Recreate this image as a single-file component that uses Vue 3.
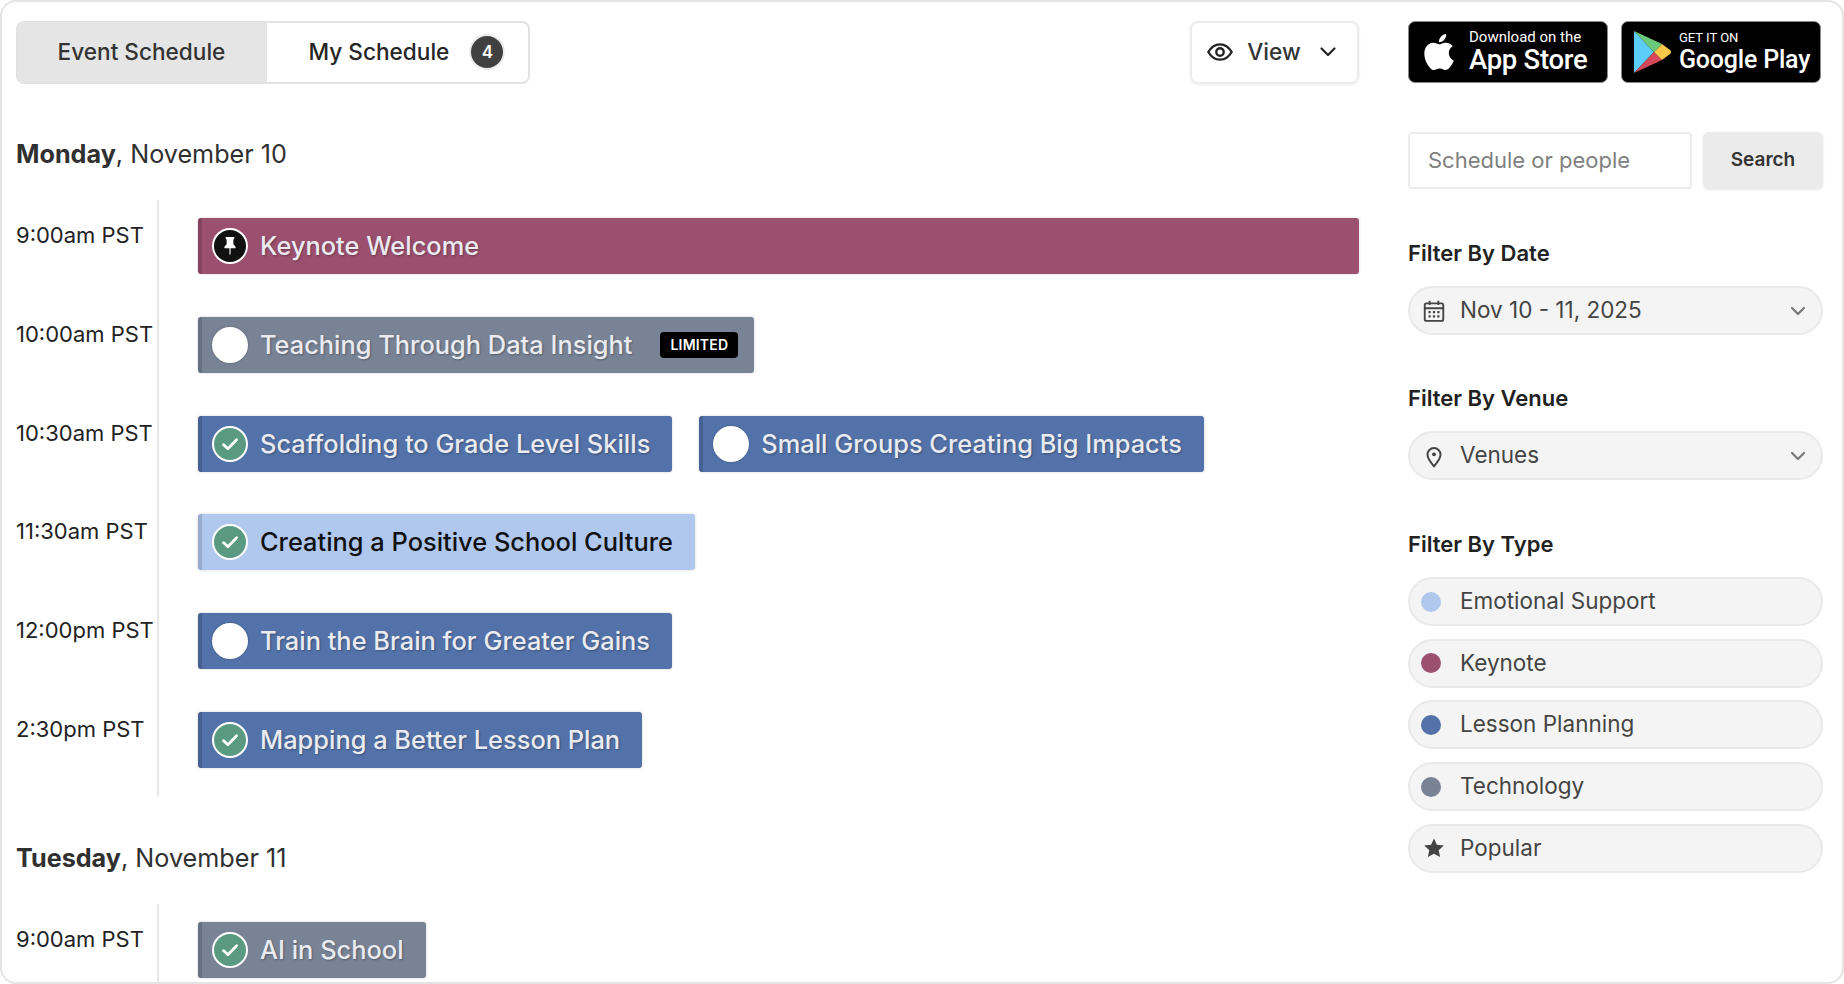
<script setup>
const days = [
  {
    bold: 'Monday', rest: ', November 10',
    rows: [
      { time: '9:00am PST', events: [{ title: 'Keynote Welcome', kind: 'keynote', state: 'pin', full: true }] },
      { time: '10:00am PST', events: [{ title: 'Teaching Through Data Insight', kind: 'tech', state: 'open', badge: 'LIMITED' }] },
      { time: '10:30am PST', events: [
        { title: 'Scaffolding to Grade Level Skills', kind: 'lesson', state: 'done' },
        { title: 'Small Groups Creating Big Impacts', kind: 'lesson', state: 'open' }
      ] },
      { time: '11:30am PST', events: [{ title: 'Creating a Positive School Culture', kind: 'support', state: 'done' }] },
      { time: '12:00pm PST', events: [{ title: 'Train the Brain for Greater Gains', kind: 'lesson', state: 'open' }] },
      { time: '2:30pm PST', events: [{ title: 'Mapping a Better Lesson Plan', kind: 'lesson', state: 'done' }] }
    ]
  },
  {
    bold: 'Tuesday', rest: ', November 11',
    rows: [{ time: '9:00am PST', events: [{ title: 'AI in School', kind: 'tech', state: 'done' }] }]
  }
]
const types = [
  { label: 'Emotional Support', color: '#b0c8ee' },
  { label: 'Keynote', color: '#9c5070' },
  { label: 'Lesson Planning', color: '#5272a9' },
  { label: 'Technology', color: '#788395' }
]
</script>

<template>
  <div class="page">
    <main class="main">
      <div class="topbar">
        <div class="tabs">
          <div class="tab active">Event Schedule</div>
          <div class="tab mine">My Schedule <span class="count">4</span></div>
        </div>
        <div class="view">
          <svg width="28" height="28" viewBox="0 0 24 24" fill="none" stroke="#222" stroke-width="2"><path d="M2 12c2.600-4.400 6-6.600 10-6.600s7.400 2.200 10 6.600c-2.600 4.400-6 6.600-10 6.600S4.600 16.400 2 12z"/><circle cx="12" cy="12" r="3.200"/></svg>
          <span>View</span>
          <svg class="view-chev" width="20" height="20" viewBox="0 0 20 20" fill="none" stroke="#222" stroke-width="2.200" stroke-linecap="round" stroke-linejoin="round"><path d="M3.500 6.500 10 13l6.500-6.500"/></svg>
        </div>
      </div>

      <section v-for="day in days" :key="day.bold" class="day">
        <h2 class="day-title"><b>{{ day.bold }}</b>{{ day.rest }}</h2>
        <div v-for="row in day.rows" :key="row.time" class="row">
          <div class="time">{{ row.time }}</div>
          <div class="events">
            <div v-for="ev in row.events" :key="ev.title" class="event" :class="[ev.kind, { full: ev.full, tight: ev.badge }]">
              <span v-if="ev.state === 'pin'" class="mark pin">
                <svg width="18" height="18" viewBox="0 0 16 16" fill="#fff"><path d="M4.146.146A.5.5 0 0 1 4.500 0h7a.5.5 0 0 1 .5.500c0 .680-.342 1.174-.646 1.479-.126.125-.250.224-.354.298v4.431l.078.048c.203.127.476.314.751.555C12.360 7.775 13 8.527 13 9.500a.5.500 0 0 1-.5.500h-4v4.500c0 .276-.224 1.500-.5 1.500s-.5-1.224-.5-1.500V10h-4a.5.500 0 0 1-.5-.5c0-.973.640-1.725 1.170-2.189A6 6 0 0 1 5 6.708V2.277a3 3 0 0 1-.354-.298C4.342 1.674 4 1.179 4 .5a.5.500 0 0 1 .146-.354"/></svg>
              </span>
              <span v-else-if="ev.state === 'done'" class="mark done">
                <svg width="24" height="24" viewBox="0 0 20 20" fill="none" stroke="#fff" stroke-width="2.300" stroke-linecap="round" stroke-linejoin="round"><path d="M4.500 10.500 8.200 14 15.500 6.500"/></svg>
              </span>
              <span v-else class="mark open"></span>
              <span class="ev-title">{{ ev.title }}</span>
              <span v-if="ev.badge" class="limited">{{ ev.badge }}</span>
            </div>
          </div>
        </div>
      </section>
    </main>

    <aside class="side">
      <div class="stores">
        <div class="store">
          <svg class="apple" width="36" height="38" viewBox="0 0 24 24" fill="#fff"><path d="M12.152 6.896c-.948 0-2.415-1.078-3.960-1.040-2.040.027-3.910 1.183-4.961 3.014-2.117 3.675-.546 9.103 1.519 12.090 1.013 1.454 2.208 3.090 3.792 3.039 1.520-.065 2.090-.987 3.935-.987 1.831 0 2.350.987 3.960.948 1.637-.026 2.676-1.480 3.676-2.948 1.156-1.688 1.636-3.325 1.662-3.415-.039-.013-3.182-1.221-3.220-4.857-.026-3.040 2.480-4.494 2.597-4.559-1.429-2.090-3.623-2.324-4.390-2.376-2-.156-3.675 1.090-4.610 1.090zM15.530 3.830c.843-1.012 1.400-2.427 1.245-3.830-1.207.052-2.662.805-3.532 1.818-.780.896-1.454 2.338-1.273 3.714 1.338.104 2.715-.688 3.559-1.701"/></svg>
          <div class="store-text">
            <span class="small">Download on the</span>
            <span class="large">App Store</span>
          </div>
        </div>
        <div class="store play">
          <svg width="38" height="44" viewBox="0 0 38 44">
            <path d="M1 1v42l20-21z" fill="#5ccdf8"/>
            <path d="M1 1l20 21 8-8z" fill="#6ccb7a"/>
            <path d="M1 43l20-21 8 8z" fill="#d8465a"/>
            <path d="M21 22l8-8 8 6a2.500 2.500 0 0 1 0 4l-8 6z" fill="#fbc84a"/>
          </svg>
          <div class="store-text">
            <span class="small caps">GET IT ON</span>
            <span class="large gp">Google Play</span>
          </div>
        </div>
      </div>

      <div class="search">
        <div class="search-input">Schedule or people</div>
        <div class="search-btn">Search</div>
      </div>

      <h3 class="filter-title first">Filter By Date</h3>
      <div class="pill">
        <span class="pill-icon">
          <svg width="24" height="24" viewBox="0 0 22 22" fill="none" stroke="#444" stroke-width="1.700"><rect x="2.500" y="4" width="17" height="16" rx="1.500"/><path d="M2.500 8.500h17M7 1.500v4M15 1.500v4"/><path d="M6 12h2M10 12h2M14 12h2M6 16h2M10 16h2M14 16h2" stroke-width="2"/></svg>
        </span>
        <span class="pill-label">Nov 10 - 11, 2025</span>
        <svg class="chev" width="18" height="18" viewBox="0 0 18 18" fill="none" stroke="#777" stroke-width="2.200" stroke-linecap="round" stroke-linejoin="round"><path d="M3 6l6 6 6-6"/></svg>
      </div>

      <h3 class="filter-title">Filter By Venue</h3>
      <div class="pill">
        <span class="pill-icon">
          <svg width="24" height="24" viewBox="0 0 22 22" fill="none" stroke="#444" stroke-width="1.800"><path d="M11 20.500c-3.800-4.400-6-7.600-6-10.800a6 6 0 0 1 12 0c0 3.200-2.200 6.400-6 10.800z"/><circle cx="11" cy="9.500" r="1.800" fill="#444" stroke="none"/></svg>
        </span>
        <span class="pill-label">Venues</span>
        <svg class="chev" width="18" height="18" viewBox="0 0 18 18" fill="none" stroke="#777" stroke-width="2.200" stroke-linecap="round" stroke-linejoin="round"><path d="M3 6l6 6 6-6"/></svg>
      </div>

      <h3 class="filter-title type-title">Filter By Type</h3>
      <div class="type-list">
        <div v-for="t in types" :key="t.label" class="pill">
          <span class="pill-icon"><i class="dot" :style="{ background: t.color }"></i></span>
          <span class="pill-label">{{ t.label }}</span>
        </div>
        <div class="pill">
          <span class="pill-icon">
            <svg width="24" height="24" viewBox="0 0 24 24" fill="#444"><path d="M12 2.500l2.900 6.300 6.900.8-5.100 4.700 1.400 6.800-6.100-3.400-6.100 3.400 1.400-6.800-5.100-4.700 6.900-.8z"/></svg>
          </span>
          <span class="pill-label">Popular</span>
        </div>
      </div>
    </aside>
  </div>
</template>

<style>
html, body { margin: 0; background: #fff; }
</style>

<style scoped>
.page {
  box-sizing: border-box;
  width: 1844px;
  height: 984px;
  border: 2px solid #e4e4e4;
  border-radius: 16px;
  padding: 19px 19px 0 14px;
  display: flex;
  overflow: hidden;
  font-family: Inter, "Liberation Sans", sans-serif;
  color: #262626;
}
.main { width: 1343px; flex: none; }
.side { width: 415px; flex: none; margin-left: 49px; }

.topbar { display: flex; justify-content: space-between; height: 63px; }
.tabs {
  display: flex;
  width: 514px;
  box-sizing: border-box;
  border: 2px solid #e2e2e2;
  border-radius: 8px;
  overflow: hidden;
  font-size: 22.6px;
  font-weight: 500;
}
.tab { display: flex; align-items: center; justify-content: center; gap: 22px; flex: 1; color: #262626; padding-bottom: 2px; }
.tab.mine { padding-left: 17px; }
.tab.active { flex: none; width: 249px; background: #e5e5e5; color: #333; padding-right: 2px; box-sizing: border-box; }
.count {
  width: 32px; height: 32px; border-radius: 50%;
  background: #404040; color: #fff; font-size: 17px; font-weight: 600;
  display: flex; align-items: center; justify-content: center;
  box-shadow: 0 0 0 2px #eaeaea;
}
.view {
  width: 169px; box-sizing: border-box;
  border: 2px solid #ececec; border-radius: 8px;
  display: flex; align-items: center; justify-content: center; gap: 13px;
  padding: 0 5px 2px 0;
  font-size: 22.6px; font-weight: 500; color: #333;
  box-shadow: 0 1px 3px rgba(0,0,0,.08);
}
.view-chev { margin-left: 4px; }

.day { margin-top: 50px; }
.day + .day { margin-top: 42px; }
.day-title { margin: 0 0 26px; font-size: 25.2px; line-height: 40px; font-weight: 400; color: #303030; }
.day-title b { font-weight: 700; }

.row { display: flex; height: 98.8px; }
.row:last-child { height: 102px; }
.time {
  width: 143px; flex: none; box-sizing: border-box;
  border-right: 2px solid #e6e6e6;
  padding-top: 20px;
  font-size: 22px; line-height: 30px; color: #222;
  white-space: nowrap;
}
.events { display: flex; gap: 27px; padding: 18px 0 0 39px; flex: 1; align-items: flex-start; }
.event {
  height: 56px; box-sizing: border-box;
  display: flex; align-items: center;
  padding: 0 22px 0 10px;
  border-left: 4px solid rgba(0,0,0,.14);
  border-radius: 3px;
  box-shadow: 0 0 3px rgba(0,0,0,.18);
  color: #e9ebf0;
  font-size: 25.4px; font-weight: 500;
  text-shadow: 1px 1px 2px rgba(0,0,0,.3);
  white-space: nowrap;
}
.ev-title { padding-bottom: 1px; }
.event.full { flex: 1; }
.event.tight { padding-right: 16px; }
.keynote { background: #9c5070; }
.tech { background: #788395; }
.lesson { background: #5272a9; }
.support { background: #b0c8ee; color: #111; text-shadow: none; }
.mark {
  width: 36px; height: 36px; border-radius: 50%; box-sizing: border-box;
  border: 2px solid #fff; flex: none; margin-right: 12px;
  display: flex; align-items: center; justify-content: center;
}
.pin { background: #111; }
.done { background: #5a9a82; }
.open { background: #fff; box-shadow: 0 0 2px rgba(0,0,0,.3); }
.limited {
  margin-left: 28px; background: #000; color: #fff;
  height: 26px; padding: 0 10px; border-radius: 4px;
  display: flex; align-items: center;
  font-size: 14px; font-weight: 600; text-shadow: none; letter-spacing: .2px;
}

.stores { display: flex; gap: 13px; height: 63px; }
.store {
  width: 200px; height: 62px; box-sizing: border-box;
  background: #000; border-radius: 7px; border: 1px solid #888;
  display: flex; align-items: center; gap: 12px; padding-left: 12px; color: #fff;
}
.play { gap: 8px; padding-left: 11px; }
.store-text { display: flex; flex-direction: column; font-family: Roboto, Inter, sans-serif; white-space: nowrap; padding-bottom: 1px; }
.small { font-size: 15px; line-height: 15px; margin-top: 2px; }
.caps { font-size: 13px; }
.large { font-size: 27.5px; line-height: 30px; font-weight: 500; letter-spacing: -.3px; }
.gp { font-size: 25px; letter-spacing: -.2px; }

.search { display: flex; gap: 11px; margin-top: 48px; height: 57px; }
.search-input {
  width: 284px; box-sizing: border-box; border: 2px solid #ececec; border-radius: 4px;
  display: flex; align-items: center; padding: 0 0 2px 18px;
  font-size: 22px; color: #808080;
}
.search-btn {
  flex: 1; background: #ebebeb; border-radius: 6px;
  display: flex; align-items: center; justify-content: center;
  padding-bottom: 2px;
  font-size: 19px; font-weight: 600; color: #333;
  box-shadow: 0 1px 3px rgba(0,0,0,.1);
}

.filter-title { margin: 49px 0 19px; font-size: 22px; line-height: 28px; font-weight: 600; color: #222; }
.filter-title.first { margin-top: 50px; }
.filter-title.type-title { margin-top: 50px; }
.pill {
  height: 49px; box-sizing: border-box;
  background: #f4f4f4; border: 2px solid #e9e9e9; border-radius: 25px;
  display: flex; align-items: center; padding-left: 6px;
  font-size: 22.5px; color: #444;
}
.pill-icon { width: 36px; display: flex; align-items: center; justify-content: center; flex: none; margin-right: 8px; }
.pill-label { flex: 1; padding-bottom: 2px; }
.chev { margin-right: 14px; }
.dot { width: 20px; height: 20px; border-radius: 50%; display: block; margin-right: 6px; }
.type-list { display: flex; flex-direction: column; gap: 12.7px; }
</style>
